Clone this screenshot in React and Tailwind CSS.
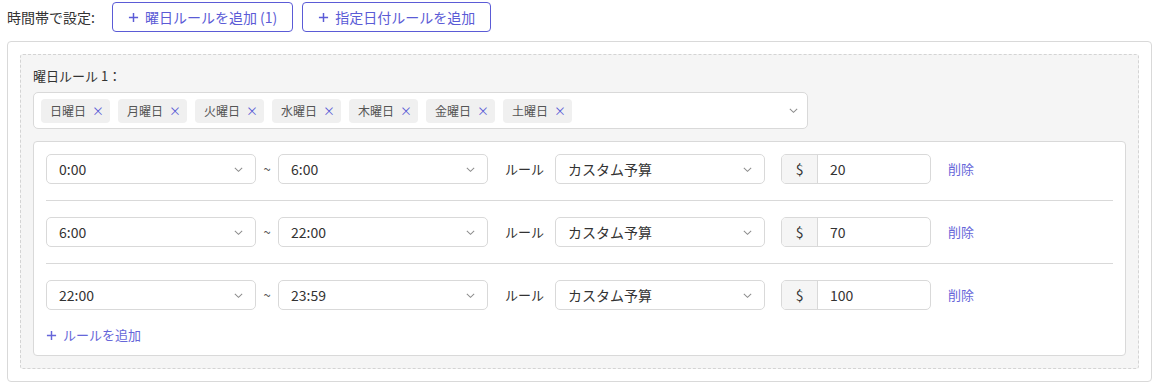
import React from "react";

const days = ["日曜日", "月曜日", "火曜日", "水曜日", "木曜日", "金曜日", "土曜日"];
const rules = [
  { from: "0:00", to: "6:00", amount: "20" },
  { from: "6:00", to: "22:00", amount: "70" },
  { from: "22:00", to: "23:59", amount: "100" },
];

function Chevron({ className = "" }) {
  return (
    <svg viewBox="0 0 12 12" className={`w-[11px] h-[11px] ${className}`} fill="none" stroke="currentColor" strokeWidth="1.1">
      <path d="M2 4.2l4 3.8 4-3.8" />
    </svg>
  );
}

function Plus({ className = "" }) {
  return (
    <svg viewBox="0 0 12 12" className={`w-[11px] h-[11px] ${className}`} fill="none" stroke="currentColor" strokeWidth="1.6">
      <path d="M6 1v10M1 6h10" />
    </svg>
  );
}

function Select({ value, width = "w-[210px]" }) {
  return (
    <div className={`${width} h-[30px] flex items-center justify-between pl-[12px] pr-[11px] bg-white border border-[#d9d9d9] rounded-[5px]`}>
      <span className="text-[14px] text-[#333]">{value}</span>
      <Chevron className="text-[#8c8c8c]" />
    </div>
  );
}

export default function App() {
  return (
    <div className="w-[1159px] h-[387px] bg-white text-[#333]" style={{ fontFamily: '"Noto Sans CJK JP", "Noto Sans", sans-serif' }}>
      {/* Header */}
      <div className="flex items-center pl-[7px] pt-[2px]">
        <span className="text-[14px] mr-[17px]">時間帯で設定:</span>
        <button className="h-[30px] px-[15px] flex items-center gap-[6px] border border-[#5b5bd6] rounded-[4px] text-[#5b5bd6] text-[14px] mr-[9px]">
          <Plus />
          曜日ルールを追加 (1)
        </button>
        <button className="h-[30px] px-[15px] flex items-center gap-[6px] border border-[#5b5bd6] rounded-[4px] text-[#5b5bd6] text-[14px]">
          <Plus />
          指定日付ルールを追加
        </button>
      </div>

      {/* Outer card */}
      <div className="mx-[7px] mt-[9px] border border-[#d9d9d9] rounded-[4px] p-[12px]">
        <div className="border border-dashed border-[#d4d4d4] bg-[#f5f5f5] rounded-[3px] px-[12px] pt-[11px] pb-[12px]">
          <div className="text-[13px] leading-[20px] mb-[6px]">曜日ルール 1：</div>
          <div className="w-[775px] h-[37px] bg-white border border-[#d9d9d9] rounded-[5px] flex items-center justify-between pl-[7px] pr-[8px]">
            <div className="flex items-center gap-[8px]">
              {days.map((d) => (
                <span key={d} className="h-[24px] flex items-center gap-[6px] pl-[9px] pr-[10px] bg-[#f0f0f0] rounded-[4px] text-[12px] text-[#555]">
                  {d}
                  <span className="w-[8px] text-center text-[#5b5bd6] text-[12px] leading-none">×</span>
                </span>
              ))}
            </div>
            <Chevron className="text-[#8c8c8c]" />
          </div>

          {/* Rules card */}
          <div className="mt-[12px] bg-white border border-[#d9d9d9] rounded-[4px] px-[12px] pt-[12px] pb-[10px]">
            {rules.map((r, i) => (
              <div key={i}>
                {i > 0 && <div className="h-px bg-[#d9d9d9] my-[16px]" />}
                <div className="flex items-center">
                  <Select value={r.from} />
                  <span className="w-[22px] text-center text-[13px] text-[#555]">~</span>
                  <Select value={r.to} />
                  <span className="ml-[17px] mr-[11px] text-[13px] text-[#333]">ルール</span>
                  <Select value="カスタム予算" />
                  <div className="ml-[16px] w-[150px] h-[30px] flex border border-[#d9d9d9] rounded-[5px] overflow-hidden">
                    <span className="w-[36px] flex items-center justify-center bg-[#f5f5f5] border-r border-[#d9d9d9] text-[14px]">$</span>
                    <span className="flex items-center pl-[12px] text-[14px] bg-white">{r.amount}</span>
                  </div>
                  <span className="ml-[17px] text-[13px] text-[#6666d9]">削除</span>
                </div>
              </div>
            ))}
            <div className="mt-[15px] flex items-center gap-[6px] text-[13px] text-[#6666d9] h-[20px]">
              <Plus />
              ルールを追加
            </div>
          </div>
        </div>
      </div>
    </div>
  );
}
